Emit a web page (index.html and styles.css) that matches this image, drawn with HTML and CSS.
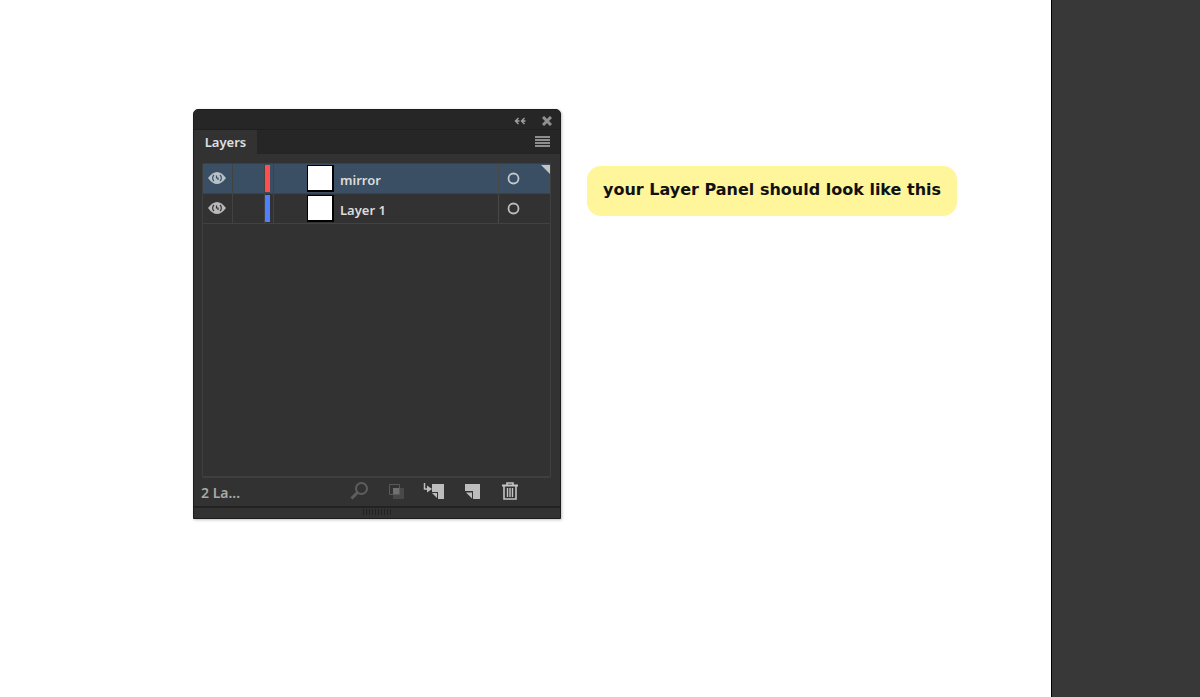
FILE: index.html
```html
<!DOCTYPE html>
<html lang="en">
<head>
  <meta charset="UTF-8" />
  <meta name="viewport" content="width=device-width, initial-scale=1.0"/>
  <title>Layer Panel</title>
  <link rel="stylesheet" href="styles.css">
</head>
<body>

<main class="canvas">
  <section class="panel">
    <div class="panel-top">
      <button type="button" aria-label="Collapse">
        <svg width="12" height="8" viewBox="0 0 12 8" fill="none" stroke="#a0a0a0" stroke-width="1.4"><path d="M4.500 1L1.500 4L4.500 7M1.500 4H5.500M10.500 1L7.500 4L10.500 7M7.500 4H11.500"/></svg>
      </button>
      <button type="button" aria-label="Close">
        <svg width="10" height="10" viewBox="0 0 10 10" stroke="#909090" stroke-width="3"><path d="M1 1L9 9M9 1L1 9"/></svg>
      </button>
    </div>

    <div class="panel-tabs">
      <button type="button" class="tab">Layers</button>
      <button type="button" class="btn-menu" aria-label="Panel menu">
        <svg width="15" height="12" viewBox="0 0 15 12" fill="#8e8e8e"><path d="M0 0H15V2H0ZM0 3H15V5H0ZM0 6H15V8H0ZM0 9H15V11H0Z"/></svg>
      </button>
    </div>

    <ul class="layers">
      <!-- Layer: mirror -->
      <li class="layer selected">
        <button type="button" class="cell eye" aria-label="Toggle mirror">
          <svg width="18" height="12" viewBox="0 0 18 12"><path d="M0 6Q9-6 18 6Q9 18 0 6Z" fill="#b9c1c8"/><path d="M6 3A4 4 0 0 0 6 9M12 3A4 4 0 0 1 12 9" fill="none" stroke="#3a4f63" stroke-width="1.2"/><path d="M8.500 3.500V6H10V8" fill="none" stroke="#3a4f63" stroke-width="1.2"/></svg>
        </button>
        <span class="cell"></span>
        <span class="cell color"><i class="red"></i></span>
        <span class="thumb"></span>
        <span class="name">mirror</span>
        <button type="button" class="target" aria-label="Target mirror">
          <svg width="13" height="13" viewBox="0 0 13 13" fill="none" stroke="#c0c8ce" stroke-width="1.8"><circle cx="6.5" cy="6.5" r="5"/></svg>
        </button>
        <svg class="corner" width="9" height="9" viewBox="0 0 9 9" fill="#c4c4c4"><path d="M0 0H9V9Z"/></svg>
      </li>

      <!-- Layer: Layer 1 -->
      <li class="layer">
        <button type="button" class="cell eye" aria-label="Toggle Layer 1">
          <svg width="18" height="12" viewBox="0 0 18 12"><path d="M0 6Q9-6 18 6Q9 18 0 6Z" fill="#b9b9b9"/><path d="M6 3A4 4 0 0 0 6 9M12 3A4 4 0 0 1 12 9" fill="none" stroke="#323232" stroke-width="1.2"/><path d="M8.500 3.500V6H10V8" fill="none" stroke="#323232" stroke-width="1.2"/></svg>
        </button>
        <span class="cell"></span>
        <span class="cell color"><i class="blue"></i></span>
        <span class="thumb"></span>
        <span class="name">Layer 1</span>
        <button type="button" class="target" aria-label="Target Layer 1">
          <svg width="13" height="13" viewBox="0 0 13 13" fill="none" stroke="#bdbdbd" stroke-width="1.8"><circle cx="6.5" cy="6.5" r="5"/></svg>
        </button>
      </li>
    </ul>

    <div class="panel-footer">
      <span class="count">2 La...</span>
      <div class="actions">
        <button type="button" aria-label="Locate object">
          <svg width="22" height="20" viewBox="0 0 22 20" fill="none" stroke="#5e5e5e"><circle cx="14.500" cy="7.500" r="5.5" stroke-width="2"/><path d="M10.500 11.500L4.500 17.500" stroke-width="3"/></svg>
        </button>
        <button type="button" aria-label="Make clipping mask">
          <svg width="22" height="20" viewBox="0 0 22 20"><path d="M8 7H19V18H8Z" fill="#484848"/><path d="M4.5 3.5H14.500V13.500H4.500Z" fill="none" stroke="#5a5a5a"/><path d="M8 7H14V13H8Z" fill="#707070"/></svg>
        </button>
        <button type="button" aria-label="Create new sublayer">
          <svg width="22" height="20" viewBox="0 0 22 20"><path d="M1.500 2V8H5" fill="none" stroke="#bdbdbd" stroke-width="1.500"/><path d="M4 4.500L9 8L4 11.500Z" fill="#bdbdbd"/><path d="M9 3H21V18H15V11H9Z" fill="#bdbdbd"/><path d="M9 12H14V17Z" fill="#bdbdbd"/></svg>
        </button>
        <button type="button" aria-label="Create new layer">
          <svg width="22" height="20" viewBox="0 0 22 20" fill="#bdbdbd"><path d="M4 3H19V18H12V10H4Z"/><path d="M5 11.500H11V17.500Z"/></svg>
        </button>
        <button type="button" aria-label="Delete selection">
          <svg width="22" height="20" viewBox="0 0 22 20" fill="none" stroke="#c4c4c4"><path d="M3 4.500H19" stroke-width="2"/><path d="M8 4V2H14V4M5 5V18H17V5" stroke-width="1.600"/><path d="M8.500 7V16M11 7V16M13.500 7V16" stroke-width="1.400"/></svg>
        </button>
      </div>
    </div>

    <div class="grip"><span></span></div>
  </section>

  <p class="note">your Layer Panel should look like this</p>
</main>

<aside class="sidebar"></aside>

</body>
</html>
```
FILE: styles.css
```css
* {
  box-sizing: border-box;
}

body {
  display: flex;
  min-height: 100vh;
  margin: 0;
  background-color: #fff;
  font-family: "Noto Sans", sans-serif;
}

button {
  display: flex;
  align-items: center;
  justify-content: center;
  padding: 0;
  border: none;
  background: none;
  font-family: inherit;
  cursor: pointer;
}

.canvas {
  flex: 1;
  display: flex;
  align-items: flex-start;
  gap: 26px;
  padding: 109px 40px 40px 193px;
}

.sidebar {
  flex: 0 0 149px;
  border-left: 1px solid #000;
  background-color: #383838;
}

.panel {
  flex: 0 0 368px;
  border: 1px solid #1c1c1c;
  border-radius: 5px 5px 0 0;
  background-color: #323232;
  box-shadow: 1px 1px 3px rgba(0, 0, 0, 0.25);
  overflow: hidden;
}

.panel-top {
  display: flex;
  align-items: center;
  justify-content: flex-end;
  gap: 16px;
  height: 19px;
  padding: 3px 8px 0 0;
  background-color: #262626;
}

.panel-tabs {
  display: flex;
  justify-content: space-between;
  height: 25px;
  padding-right: 10px;
  border-top: 1px solid #1f1f1f;
  background-color: #262626;
}

.tab {
  width: 63px;
  background-color: #323232;
  color: #e0e0e0;
  font-size: 13px;
  font-weight: 600;
}

.layers {
  height: 315px;
  margin: 9px 9px 0 8px;
  padding: 0;
  border: 2px solid #3f3f3f;
  border-width: 1px 1px 2px;
  border-radius: 2px;
  list-style: none;
}

.layer {
  position: relative;
  display: grid;
  grid-template-columns: 30px 32px 39px 33px 1fr 52px;
  height: 30px;
  border-bottom: 1px solid #424242;
}

.selected {
  background-color: #3a4f63;
}

.cell {
  border-right: 1px solid #424242;
}

.eye {
  padding: 0 2px 2px 0;
}

.color {
  display: flex;
  width: 9px;
  padding: 1px 0;
}

.color i {
  width: 5px;
}

.red {
  background-color: #ff4f4f;
}

.blue {
  background-color: #4f80ff;
}

.thumb {
  align-self: center;
  width: 27px;
  height: 27px;
  margin-left: 3px;
  border: 1px solid #000;
  border-width: 1px 2px 2px 1px;
  background-color: #fff;
}

.name {
  align-self: center;
  padding: 2px 0 0 3px;
  color: #dcdcdc;
  font-size: 13px;
  font-weight: 600;
  line-height: 18px;
}

.target {
  justify-content: flex-start;
  padding-left: 8px;
  border-left: 1px solid #484848;
}

.corner {
  position: absolute;
  top: 1px;
  right: 0;
}

.panel-footer {
  display: flex;
  align-items: center;
  height: 28px;
  padding: 0 39px 2px 7px;
}

.count {
  flex: 1;
  padding-top: 3px;
  color: #a8a8a8;
  font-size: 14px;
  font-weight: 600;
}

.actions {
  display: flex;
  gap: 16px;
}

.grip {
  display: flex;
  justify-content: center;
  height: 12px;
  padding-top: 1px;
  border-top: 2px solid #222;
}

.grip span {
  width: 28px;
  height: 6px;
  background: repeating-linear-gradient(to right, #222 0 1px, #323232 1px 3px);
}

.note {
  margin: 57px 0 0;
  padding: 12px 16px 14px;
  border-radius: 14px;
  background-color: #fff59b;
  color: #111;
  font-family: "DejaVu Sans", sans-serif;
  font-size: 16px;
  font-weight: 600;
  line-height: 24px;
  white-space: nowrap;
}
```
